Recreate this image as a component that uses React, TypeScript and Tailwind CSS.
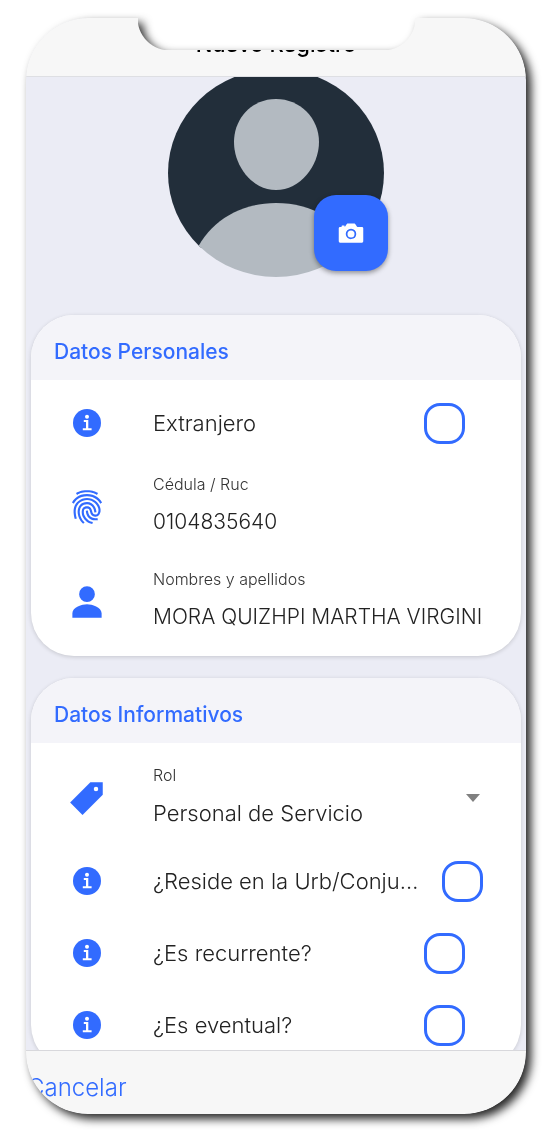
import React from "react";
import { IoCameraSharp, IoFingerPrintSharp, IoPersonSharp, IoPricetagSharp } from "react-icons/io5";

interface CardProps {
  title: string;
  children: React.ReactNode;
}

interface CheckRowProps {
  id: string;
  label: string;
  wide?: boolean;
}

interface FieldRowProps {
  id: string;
  label: string;
  icon: React.ReactNode;
  children: React.ReactNode;
}

const Card: React.FC<CardProps> = ({ title, children }) => (
  <section className="shrink-0 overflow-hidden rounded-[43px] bg-white shadow-[0_1px_4px_rgba(0,0,0,0.16)]">
    <h2 className="bg-[#f4f4f9] px-[23px] pt-[22px] pb-[14px] text-[21px] leading-[29px] font-medium text-[#326bff]">{title}</h2>
    <div className="py-[7px]">{children}</div>
  </section>
);

const InfoIcon = () => (
  <svg viewBox="0 0 36 36" className="mr-12 size-9 shrink-0" aria-hidden="true">
    <circle cx="18" cy="18" r="14" fill="#326bff" />
    <circle cx="18" cy="11.8" r="2" fill="#fff" />
    <path d="M14.8 15H19.3V23.2H22.6V25.3H13.8V23.2H17V17.1H14.8Z" fill="#fff" />
  </svg>
);

const CheckRow: React.FC<CheckRowProps> = ({ id, label, wide }) => (
  <div className="flex h-[72px] items-center pr-[38px] pl-[38px]">
    <InfoIcon />
    <label htmlFor={id} className="mr-4 min-w-0 flex-1 truncate text-[22px] leading-8 font-light text-[#222]">
      {label}
    </label>
    <input
      id={id}
      type="checkbox"
      className={`size-[41px] shrink-0 appearance-none rounded-[16px] border-3 border-[#326bff] bg-white checked:bg-[#326bff] ${
        wide ? "" : "mr-[18px]"
      }`}
    />
  </div>
);

const FieldRow: React.FC<FieldRowProps> = ({ id, label, icon, children }) => (
  <div className="flex h-[95px] items-center pr-[38px] pl-[38px] text-[#222]">
    <div className="mr-12 shrink-0 text-[#326bff]">{icon}</div>
    <div className="min-w-0 flex-1">
      <label htmlFor={id} className="block text-[16px] leading-5 font-light text-[#333]">
        {label}
      </label>
      <div className="mt-[10px] leading-9 font-light">{children}</div>
    </div>
  </div>
);

const Avatar = () => (
  <svg viewBox="0 0 216 208" className="h-[208px] w-[216px] rounded-[50%]" aria-hidden="true">
    <path d="M0 0H216V182H188L108 140L28 182H0Z" fill="#222e3a" />
    <path d="M108 30C132 30 151 49 151 73C151 97 132 121 108 121C84 121 66 97 66 73C66 49 84 30 108 30Z" fill="#b3bac1" />
    <path d="M28 182C42 152 72 134 108 134C144 134 174 152 188 182V208H28Z" fill="#b3bac1" />
  </svg>
);

export default function App() {
  return (
    <div className="min-h-screen bg-white py-[18px] pr-[27px] pl-[26px] font-['Inter','Liberation_Sans',sans-serif]">
      <div className="drop-shadow-[5px_5px_5px_rgba(0,0,0,0.85)]">
        {/* Phone body, with the notch cut out of the top edge */}
        <div className="flex h-[calc(100vh-36px)] flex-col overflow-hidden rounded-[62px] bg-[#ebecf5] [mask:linear-gradient(#000,#000)_0_0/112px_32px_no-repeat,linear-gradient(#000,#000)_100%_0/111px_32px_no-repeat,linear-gradient(#000,#000)_0_32px/100%_100%_no-repeat,radial-gradient(circle_at_100%_0,transparent_32px,#000_33px)_112px_0/32px_32px_no-repeat,radial-gradient(circle_at_0_0,transparent_32px,#000_33px)_calc(100%_-_111px)_0/32px_32px_no-repeat]">
          <header className="flex h-[59px] shrink-0 items-end justify-center border-b border-[#dedfe3] bg-[#f7f7f7] pb-[18px]">
            <h1 className="text-[22px] leading-7 font-medium text-black">Nuevo Registro</h1>
          </header>

          <main className="flex min-h-0 flex-1 flex-col gap-[22px] overflow-hidden px-[5px]">
            <div className="relative mx-auto -mt-2 mb-4 shrink-0">
              <Avatar />
              <button
                aria-label="Tomar foto"
                className="absolute -right-1 bottom-[6px] flex h-[76px] w-[74px] items-center justify-center rounded-[22px] bg-[#326bff] text-white shadow-[0_2px_5px_rgba(0,0,0,0.4)]"
              >
                <IoCameraSharp className="size-7" />
              </button>
            </div>

            <Card title="Datos Personales">
              <CheckRow id="extranjero" label="Extranjero" />
              <FieldRow id="cedula" label="Cédula / Ruc" icon={<IoFingerPrintSharp className="size-9" />}>
                <input id="cedula" type="text" defaultValue="0104835640" className="block w-full bg-transparent text-[21px]" />
              </FieldRow>
              <FieldRow id="nombres" label="Nombres y apellidos" icon={<IoPersonSharp className="size-9" />}>
                <input
                  id="nombres"
                  type="text"
                  defaultValue="MORA QUIZHPI MARTHA VIRGINIA"
                  className="block w-full bg-transparent text-[21px]"
                />
              </FieldRow>
            </Card>

            <Card title="Datos Informativos">
              <div className="relative">
                <FieldRow id="rol" label="Rol" icon={<IoPricetagSharp className="size-9" />}>
                  <select id="rol" className="block w-full appearance-none bg-transparent text-[22px]">
                    <option>Personal de Servicio</option>
                  </select>
                </FieldRow>
                <svg viewBox="0 0 14 8" className="pointer-events-none absolute top-[44px] right-[41px] h-2 w-3.5" aria-hidden="true">
                  <path d="M0 0H14L7 8Z" fill="#808080" />
                </svg>
              </div>
              <CheckRow id="reside" label="¿Reside en la Urb/Conjunto?" wide />
              <CheckRow id="recurrente" label="¿Es recurrente?" />
              <CheckRow id="eventual" label="¿Es eventual?" />
            </Card>
          </main>

          <footer className="flex h-16 shrink-0 items-center border-t border-[#d8d8dc] bg-[#f7f7f7] pt-[11px]">
            <button className="pl-px text-[24px] leading-8 font-light text-[#326bff]">Cancelar</button>
          </footer>
        </div>
      </div>
    </div>
  );
}
